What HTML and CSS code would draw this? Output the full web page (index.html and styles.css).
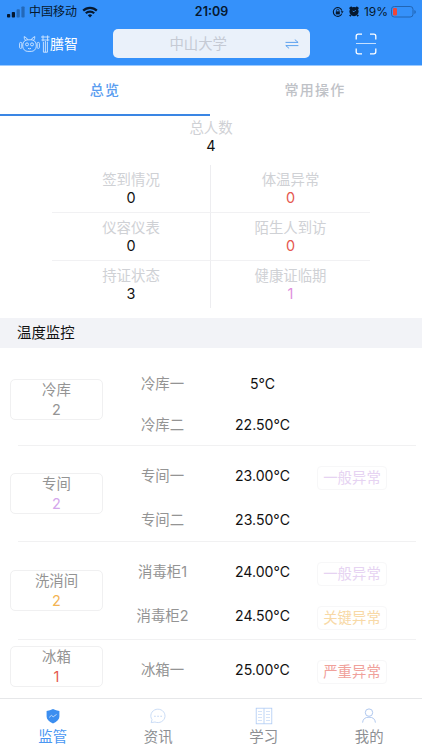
FILE: index.html
```html
<!DOCTYPE html>
<html lang="zh-CN">
<head>
  <meta charset="UTF-8" />
  <meta name="viewport" content="width=device-width, initial-scale=1.0">
  <title>膳智</title>
  <link rel="stylesheet" href="styles.css">
</head>
<body>
  <div class="app">
    <header class="header">
      <div class="status">
        <div class="status-left">
          <svg class="signal" width="18" height="12" viewBox="0 0 18 12">
            <rect x="0" y="8" width="3.2" height="3.5" rx="0.8" fill="#06182e"/>
            <rect x="4.8" y="6" width="3.2" height="5.5" rx="0.8" fill="#06182e"/>
            <rect x="9.6" y="3.2" width="3.2" height="8.3" rx="0.8" fill="#2368b8"/>
            <rect x="14.4" y="0.5" width="3.2" height="11" rx="0.8" fill="#2368b8"/>
          </svg>
          <span>中国移动</span>
          <svg width="16" height="12" viewBox="0 0 16 12" fill="none" stroke="#06182e" stroke-width="2.2">
            <path d="M1.2 4.6a9.6 9.6 0 0 1 13.6 0"/>
            <path d="M3.8 7.3a6 6 0 0 1 8.4 0"/>
            <path d="M8 11.5L5.8 9.3a3.1 3.1 0 0 1 4.4 0z" fill="#06182e" stroke="none"/>
          </svg>
        </div>
        <div class="clock">21:09</div>
        <div class="status-right">
          <svg class="lock" width="12" height="12" viewBox="0 0 12 12" fill="none" stroke="#06182e">
            <path d="M9.8 7.6A4.4 4.4 0 1 1 9.9 4.6" stroke-width="1.1"/>
            <path d="M8.6 5.2h3l-1.4 2z" fill="#06182e" stroke="none"/>
            <rect x="3.8" y="5.4" width="4" height="3" fill="#06182e" stroke="none"/>
            <path d="M4.6 5.6V4.4a1.2 1.2 0 0 1 2.4 0v1.2" stroke-width="0.8"/>
          </svg>
          <svg class="alarm" width="10" height="11" viewBox="0 0 10 11">
            <circle cx="5" cy="5.6" r="4.6" fill="#06182e"/>
            <path d="M0.6 2.8L2.8 0.9M9.4 2.8L7.2 0.9M1.8 9L0.8 10.2M8.2 9l1 1.2" stroke="#06182e" stroke-width="1.8"/>
            <path d="M6.8 4L5 5.8L3.6 5" stroke="#3591fa" stroke-width="0.8" fill="none"/>
          </svg>
          <span>19%</span>
          <svg width="25" height="12" viewBox="0 0 25 12">
            <rect x="0.5" y="0.5" width="21.5" height="10.5" rx="2.8" fill="none" stroke="#2165b4"/>
            <rect x="2" y="2" width="4" height="7.5" rx="1.2" fill="#ef4538"/>
            <path d="M23.4 4v4q1.4-.6 1.4-2t-1.4-2z" fill="#2165b4"/>
          </svg>
        </div>
      </div>
      <div class="toolbar">
        <div class="brand">
          <svg width="31" height="18" viewBox="0 0 31 18" fill="none" stroke="#d6e9ff" stroke-width="0.9">
            <rect x="3.8" y="4.8" width="13.4" height="11.6" rx="5"/>
            <path d="M8.6 4.8Q8 2.6 5.2 1.6Q5 3.6 6.4 5.4M12.400 4.800Q13 2.600 15.800 1.600Q16 3.600 14.600 5.400"/>
            <circle cx="8" cy="9.4" r="1.5"/>
            <circle cx="13" cy="9.4" r="1.5"/>
            <path d="M9 13.4q1.500.8 3 0"/>
            <rect x="0.600" y="7.400" width="2.200" height="6" rx="1"/>
            <rect x="18.200" y="7.400" width="2.200" height="6" rx="1"/>
            <path d="M22 2h8.600M22.400 5h8M24 0.400v6M28.600 0.400v6M24.400 7v10.200M26.400 6v11.200M28.400 7v10.200M24.400 17.200h4"/>
          </svg>
          <span>膳智</span>
        </div>
        <div class="search">
          <span>中山大学</span>
          <svg class="swap" width="14" height="10" viewBox="0 0 14 10" fill="none" stroke="#4d98ed" stroke-width="0.9">
            <path d="M0.5 3.4h12.6L9.8 0.6M13.4 6.6H0.8l3.3 2.800"/>
          </svg>
        </div>
        <svg class="scan" width="22" height="22" viewBox="0 0 22 22" fill="none" stroke="#fff" stroke-width="1.3">
          <path d="M1.2 6.6V3.2q0-2 2-2H7M15 1.2h3.8q2 0 2 2v3.4M20.8 15.4v3.4q0 2-2 2H15M7 20.8H3.2q-2 0-2-2v-3.4"/>
          <path d="M1 10.500h20" stroke="#c5e0ff" stroke-width="1"/>
        </svg>
      </div>
    </header>

    <div class="tabs">
      <div class="tab active">总览</div>
      <div class="tab">常用操作</div>
    </div>

    <section class="overview">
      <div class="stat total"><span class="label">总人数</span><span class="num">4</span></div>
      <div class="stats">
        <div class="stat"><span class="label">签到情况</span><span class="num">0</span></div>
        <div class="stat"><span class="label">体温异常</span><span class="num red">0</span></div>
        <div class="stat"><span class="label">仪容仪表</span><span class="num">0</span></div>
        <div class="stat"><span class="label">陌生人到访</span><span class="num red">0</span></div>
        <div class="stat"><span class="label">持证状态</span><span class="num">3</span></div>
        <div class="stat"><span class="label">健康证临期</span><span class="num pink">1</span></div>
      </div>
    </section>

    <h2 class="section-title">温度监控</h2>

    <main class="groups">
      <div class="group first">
        <div class="card"><span>冷库</span><span>2</span></div>
        <div class="rows">
          <div class="row"><span class="name">冷库一</span><span class="temp">5°C</span></div>
          <div class="row"><span class="name">冷库二</span><span class="temp">22.50°C</span></div>
        </div>
      </div>
      <div class="group">
        <div class="card"><span>专间</span><span class="purple">2</span></div>
        <div class="rows">
          <div class="row"><span class="name">专间一</span><span class="temp">23.00°C</span><span class="tag normal">一般异常</span></div>
          <div class="row"><span class="name">专间二</span><span class="temp">23.50°C</span></div>
        </div>
      </div>
      <div class="group third">
        <div class="card"><span>洗消间</span><span class="orange">2</span></div>
        <div class="rows">
          <div class="row"><span class="name">消毒柜1</span><span class="temp">24.00°C</span><span class="tag normal">一般异常</span></div>
          <div class="row"><span class="name">消毒柜2</span><span class="temp">24.50°C</span><span class="tag key">关键异常</span></div>
        </div>
      </div>
      <div class="group last">
        <div class="card"><span>冰箱</span><span class="red">1</span></div>
        <div class="rows">
          <div class="row"><span class="name">冰箱一</span><span class="temp">25.00°C</span><span class="tag serious">严重异常</span></div>
        </div>
      </div>
    </main>

    <nav class="nav">
      <a class="nav-item active">
        <svg width="18" height="18" viewBox="0 0 18 18">
          <path d="M2.600 4Q6 3.600 9 2q3 1.600 6.400 2V9.600q0 4-6.400 7Q2.600 13.600 2.600 9.600z" fill="#3b8ef0"/>
          <path d="M5.200 10.400l2.200-2 1.800 1.400L12.600 7.400" fill="none" stroke="#c9e0fb" stroke-width="0.9"/>
        </svg>
        <span>监管</span>
      </a>
      <a class="nav-item">
        <svg width="18" height="18" viewBox="0 0 18 18" fill="none" stroke="#bdd3f2" stroke-width="0.8">
          <path d="M2.200 15.600L3 12.600A7.100 6.700 0 1 1 6 15z"/>
          <path d="M5.200 9.200h1.500M8.300 9.200h1.500M11.400 9.200h1.500" stroke-width="1.100"/>
        </svg>
        <span>资讯</span>
      </a>
      <a class="nav-item">
        <svg width="18" height="18" viewBox="0 0 18 18" fill="none" stroke="#adcaf3" stroke-width="0.8">
          <rect x="1.200" y="1.200" width="15.600" height="15.600"/>
          <path d="M9 1.200v15.600"/>
          <path d="M3 4.500h4M3 7.500h4M3 10.500h4M3 13.500h4M11 4.500h4M11 7.500h4M11 10.500h4M11 13.500h4" stroke="#c9dcf7"/>
        </svg>
        <span>学习</span>
      </a>
      <a class="nav-item">
        <svg width="18" height="18" viewBox="0 0 18 18" fill="none" stroke="#a7c2ec" stroke-width="0.9">
          <circle cx="9" cy="5.600" r="3.700"/>
          <path d="M2.600 15.600q.4-5.400 6.400-5.400t6.400 5.400"/>
        </svg>
        <span>我的</span>
      </a>
    </nav>
  </div>
</body>
</html>
```

FILE: styles.css
```css
* {
  box-sizing: border-box;
}

body {
  margin: 0;
  background: #fff;
  color: #111;
  font-family: Inter, "Noto Sans CJK SC", sans-serif;
  font-size: 14.4px;
}

svg {
  display: block;
  flex: none;
}

.app {
  height: 750px;
  display: flex;
  flex-direction: column;
  overflow: hidden;
}

/* header */
.header {
  height: 66px;
  flex: none;
  background: #3591fa;
  border-bottom: 1px solid #9bcaff;
}

.status {
  height: 22px;
  display: grid;
  grid-template-columns: 1fr auto 1fr;
  align-items: center;
  padding: 0 6px 0 7px;
  color: #06182e;
  font-size: 12px;
  line-height: 22px;
}

.status-left,
.status-right {
  display: flex;
  align-items: center;
}

.status-left {
  gap: 5px;
}

.status-left span {
  padding-top: 1px;
}

.signal {
  margin-right: -1px;
}

.status-right {
  justify-content: flex-end;
}

.lock {
  margin-right: 5px;
}

.alarm {
  margin-right: 5px;
}

.status-right span {
  margin-right: 3px;
}

.clock {
  font-size: 12.5px;
  font-weight: 600;
}

.toolbar {
  height: 43px;
  display: flex;
  align-items: center;
}

.brand {
  width: 94px;
  margin-left: 19px;
  display: flex;
  align-items: center;
  color: #fff;
  font-size: 14px;
}

.brand span {
  margin-top: -2px;
}

.search {
  width: 197px;
  height: 29px;
  display: flex;
  align-items: center;
  justify-content: flex-end;
  border-radius: 5px;
  background: #eaf1fa;
  color: #c5cad4;
  line-height: 28px;
}

.search span {
  margin-right: 58px;
}

.swap {
  margin-right: 11px;
}

.scan {
  margin-left: 45px;
}

/* tabs */
.tabs {
  height: 51px;
  flex: none;
  display: flex;
}

.tab {
  width: 210px;
  text-align: center;
  line-height: 47px;
  font-size: 14px;
  font-weight: 500;
  letter-spacing: 1.2px;
  color: #bfc2c7;
}

.tab.active {
  height: 50px;
  color: #5a9df0;
  border-bottom: 2px solid #3a86e4;
}

/* overview */
.overview {
  height: 201px;
  flex: none;
}

.stat {
  display: flex;
  flex-direction: column;
  align-items: center;
}

.label {
  color: #cfd1d5;
  line-height: 20px;
}

.num {
  line-height: 16px;
}

.total {
  height: 48px;
  padding-top: 1px;
}

.stats {
  width: 318px;
  margin: 0 auto;
  display: grid;
  grid-template-columns: 159px 159px;
  grid-template-rows: 48px 48px 47px;
}

.stats .stat {
  padding-top: 5px;
  border-bottom: 1px solid #f1f1f3;
}

.stats .stat:nth-child(odd) {
  border-right: 1px solid #ededf0;
}

.stats .stat:nth-last-child(-n+2) {
  border-bottom: none;
}

.red {
  color: #e5584f;
}

.pink {
  color: #e08fdd;
}

.section-title {
  height: 30px;
  flex: none;
  margin: 0;
  padding-left: 17px;
  background: #f2f3f7;
  font-size: 14.4px;
  font-weight: 400;
  line-height: 29px;
}

/* temperature groups */
.groups {
  flex: 1;
  min-height: 0;
  overflow: hidden;
}

.group {
  display: flex;
  align-items: flex-start;
  height: 96px;
  padding: 8px 0 0 10px;
  background: linear-gradient(#f1f1f2, #f1f1f2) 18px 100% / 398px 1px no-repeat;
}

.card {
  width: 93px;
  height: 41px;
  flex: none;
  display: flex;
  flex-direction: column;
  align-items: center;
  margin-top: 19px;
  border: 1px solid #f0f0f1;
  border-radius: 5px;
  line-height: 20px;
}

.card span {
  color: #949494;
}

.card .red {
  color: #e5584f;
}

.card .purple {
  color: #d3a6ec;
}

.card .orange {
  color: #f3b452;
}

.row {
  display: grid;
  grid-template-columns: 119px 81px 98px;
  align-items: center;
  justify-items: center;
  height: 43.5px;
}

.name {
  margin-top: -2px;
  color: #949494;
}

.temp {
  font-size: 14.1px;
}

.tag {
  width: 70px;
  height: 24px;
  margin-top: 5px;
  border: 1px solid #f7f7f8;
  border-radius: 4px;
  line-height: 22px;
  text-align: center;
}

.tag.normal {
  color: #e6d3f2;
}

.tag.key {
  color: #f8d9a6;
}

.tag.serious {
  color: #f0a19b;
}

.first {
  height: 98px;
  padding-top: 15px;
}

.first .card {
  margin-top: 16px;
}

.first .row {
  height: 41px;
}

.first .temp {
  margin-top: -1px;
}

.third {
  height: 98px;
}

.third .card {
  margin-top: 20px;
}

.last {
  height: 58px;
  padding-top: 6px;
  background: none;
}

.last .card {
  margin-top: 0;
}

.last .row {
  height: 47px;
}

/* bottom nav */
.nav {
  height: 52px;
  flex: none;
  display: flex;
  border-top: 1px solid #e6e7e9;
  background: #fff;
}

.nav-item {
  flex: 1;
  display: flex;
  flex-direction: column;
  align-items: center;
  gap: 1px;
  padding-top: 8px;
  color: #8d8f93;
  line-height: 21px;
}

.nav-item.active {
  color: #4a97f2;
}
```
